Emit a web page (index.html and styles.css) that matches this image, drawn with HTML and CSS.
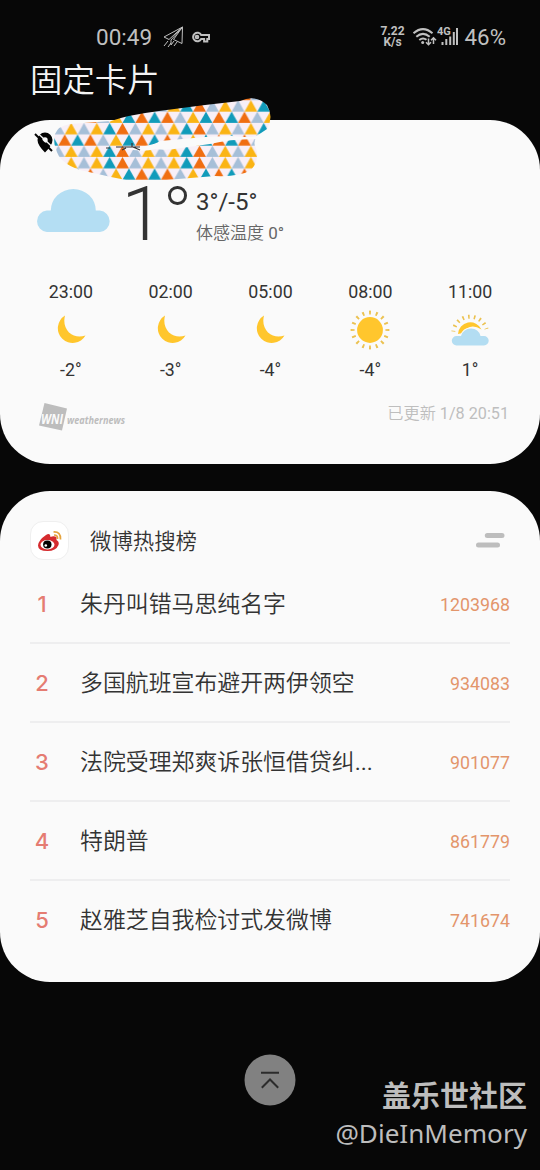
FILE: index.html
```html
<!DOCTYPE html>
<html lang="zh-CN">
<head>
<meta charset="utf-8">
<title>固定卡片</title>
<link rel="stylesheet" href="styles.css">
</head>
<body>
<div class="screen">
  <header class="status">
    <span class="clock">00:49</span>
    <svg class="plane" width="22" height="22" viewBox="0 0 22 22"><path d="M20.5 1 2 11l5 2.500L20.500 1 20 17.500 11.500 13.500 20.500 1 9 14v5l3-4M6 15l-4 5M9 17l-3 4M15 16l-3 4" /></svg>
    <svg class="key" width="18" height="12" viewBox="0 0 18 12"><path d="M9.200 4h7.800v4h-1.700v2.500h-3.200V8H9.200A4.300 4.300 0 1 1 9.200 4Z"/><circle cx="5" cy="6" r="1.300"/></svg>
    <span class="speed"><span>7.22</span><span>K/s</span></span>
    <svg class="wifi" width="25" height="22" viewBox="0 0 25 22"><path d="M1.500 7.300Q11 -1 20.500 7.300M4.300 10.800Q11 5 17.700 10.800M7.300 14Q11 11 14.500 13.800"/><circle cx="10.700" cy="16.500" r="1.500"/><path class="thin" d="M16.500 12.500v6M14 16.300l2.500 2.500 2.500-2.500M21.500 18v-6M19 14.200l2.500-2.500 2.500 2.500"/></svg>
    <svg class="signal" width="22" height="22" viewBox="0 0 22 22"><text x="0" y="9">4G</text><path d="M5.500 19v-3M9.300 19v-6M13.200 19V10.500M16.800 19V6M20 19V2"/></svg>
    <span class="battery">46%</span>
  </header>
  <h1 class="title">固定卡片</h1>

  <section class="card weather">
    <div class="place">
      <svg width="20" height="21" viewBox="0 0 20 21"><path fill-rule="evenodd" d="M11 .5a7.500 7.500 0 0 1 7.500 7.500Q18.500 13 11 20.500 3.500 13 3.500 8A7.500 7.500 0 0 1 11 .5ZM11 5.300a2.700 2.700 0 1 0 0 5.400 2.700 2.700 0 0 0 0-5.400Z"/><path class="slit" d="M3 .5 20 16.500"/><path class="slash" d="m1 2 17 17"/></svg>
    </div>
    <svg class="cover" width="220" height="88" viewBox="53 95 220 88">
      <defs>
        <path id="tri" d="M-6.420 0 0-11.350 6.420 0Z"/>
        <g id="even"><use href="#tri" x="6.420" class="mist"/><use href="#tri" x="19.260" class="gold"/><use href="#tri" x="32.100" class="mist"/><use href="#tri" x="44.940" class="gold"/><use href="#tri" x="57.780" class="teal"/><use href="#tri" x="70.620" class="flame"/></g>
        <g id="odd"><use href="#tri" x="0" class="teal"/><use href="#tri" x="12.840" class="flame"/><use href="#tri" x="25.680" class="teal"/><use href="#tri" x="38.520" class="flame"/><use href="#tri" x="51.360" class="mist"/><use href="#tri" x="64.200" class="gold"/><use href="#tri" x="77.040" class="teal"/></g>
        <pattern id="bunting" patternUnits="userSpaceOnUse" x="51.900" y="88.900" width="77.040" height="91">
          <rect width="78" height="91" class="blush"/>
          <use href="#odd" y="11.350"/><use href="#even" y="22.700"/><use href="#odd" y="34.050"/><use href="#even" y="45.400"/><use href="#odd" y="56.750"/><use href="#even" y="68.100"/><use href="#even" y="79.450"/><use href="#odd" y="90.800"/>
        </pattern>
      </defs>
      <path fill="url(#bunting)" d="M55 134Q58 126 70 124L111 121Q128 115 159 111L205 105 240 101Q256 94 267 105 274 117 267 129L258 135Q252 142 256 148 260 160 251 170 240 177 215 176L166 180 126 180 111 177 80 170Q59 163 56 149 53 143 55 134Z"/>
      <path class="gap" d="M125 148Q151 147 160 141L205 137Q222 136 232 136 252 138 256 136L263 134 259 139Q230 139 210 144L181 148Q167 151 155 149 142 153 125 148Z"/>
      <path class="remnant" d="M106 148h4m6-1h24m-18 3 4-2m7-1 7 3m-8-7v4"/>
    </svg>
    <div class="now">
      <svg class="cloud" width="76" height="43" viewBox="0 0 76 43"><path d="M10.800 43A10.800 10.800 0 0 1 10.800 21.500h4a22.500 21.500 0 0 1 45 0h4A10.800 10.800 0 0 1 64 43Z"/></svg>
      <span class="temp">1</span>
      <span class="deg"></span>
      <div class="range"><span class="hilo">3°/-5°</span><span class="feels">体感温度 <em>0°</em></span></div>
    </div>
    <div class="hours">
      <div class="hour"><span>23:00</span><svg width="40" height="40" viewBox="0 0 40 40"><path class="sunny" d="M14 5.500A14.800 14.800 0 1 0 34.500 25.500Q25 28.500 18 22.500 11.500 15.500 14 5.500Z"/></svg><span>-2°</span></div>
      <div class="hour"><span>02:00</span><svg width="40" height="40" viewBox="0 0 40 40"><path class="sunny" d="M14 5.500A14.800 14.800 0 1 0 34.500 25.500Q25 28.500 18 22.500 11.500 15.500 14 5.500Z"/></svg><span>-3°</span></div>
      <div class="hour"><span>05:00</span><svg width="40" height="40" viewBox="0 0 40 40"><path class="sunny" d="M14 5.500A14.800 14.800 0 1 0 34.500 25.500Q25 28.500 18 22.500 11.500 15.500 14 5.500Z"/></svg><span>-4°</span></div>
      <div class="hour"><span>08:00</span><svg width="40" height="40" viewBox="0 0 40 40"><circle class="sunny" cx="20" cy="20" r="12.900"/><circle class="rays" cx="20" cy="20" r="17.400" pathLength="160"/></svg><span>-4°</span></div>
      <div class="hour"><span>11:00</span><svg width="40" height="40" viewBox="0 0 40 40"><path class="sunny" d="M8 24a12.300 12.300 0 0 1 23.500-4.500Q20 12 12.500 23Z"/><path class="halfrays" pathLength="80" d="M3.300 21.500A17 17 0 0 1 36.500 19"/><path class="cool" d="M6.500 35.500a4.700 4.700 0 0 1 0-9.400h4.500q2.500-7.500 10-7.500t9.500 7.500h3.500a4.700 4.700 0 0 1 0 9.400Z"/></svg><span>1°</span></div>
    </div>
    <footer class="source">
      <svg width="90" height="30" viewBox="0 0 90 30"><path d="M5.500 0 28 5.500 23 27.500 0 22.500Z"/><text class="wn" x="2" y="21" textLength="22" lengthAdjust="spacingAndGlyphs">WNI</text><text class="wnews" x="28" y="20.500" textLength="58" lengthAdjust="spacingAndGlyphs">weathernews</text></svg>
      <span class="updated">已更新 <em>1/8 20:51</em></span>
    </footer>
  </section>

  <section class="card trends">
    <header class="head">
      <span class="logo"><svg width="26" height="24" viewBox="0 0 26 24"><path class="red" d="M9 6q3-2 4 0l.5 2q3-1.500 6 0v3q3 1.500 2 5-2.500 6-11 6Q1 22 1 16.500 1.500 11 9 6Z"/><ellipse class="eye" cx="10.500" cy="15.800" rx="7" ry="4.700"/><ellipse cx="10.300" cy="15.500" rx="4.200" ry="3.900"/><circle class="eye" cx="8.800" cy="16.500" r="1.300"/><path class="wave" d="M16.500 3q7.500-.5 7 7.500M17 6q4 0 3.500 4"/></svg></span>
      <h2>微博热搜榜</h2>
      <svg class="more" width="30" height="18" viewBox="0 0 30 18"><path d="M11.300 4.500h14.700M2.500 14h19"/></svg>
    </header>
    <ol class="list">
      <li><b>1</b><span>朱丹叫错马思纯名字</span><i>1203968</i></li>
      <li><b>2</b><span>多国航班宣布避开两伊领空</span><i>934083</i></li>
      <li><b>3</b><span>法院受理郑爽诉张恒借贷纠<em>...</em></span><i>901077</i></li>
      <li><b>4</b><span>特朗普</span><i>861779</i></li>
      <li><b>5</b><span>赵雅芝自我检讨式发微博</span><i>741674</i></li>
    </ol>
  </section>

  <footer class="bottom">
    <svg class="top" width="52" height="52" viewBox="0 0 52 52"><circle cx="26" cy="26" r="25.500"/><path d="M17 18.800h18M17.800 33.700l8.200-8.200 8.200 8.200"/></svg>
    <div class="credit"><strong>盖乐世社区</strong><span>@DieInMemory</span></div>
  </footer>
</div>
</body>
</html>
```

FILE: styles.css
```css
* { box-sizing: border-box; }
body { margin: 0; background: #070707; font-family: Roboto, "Noto Sans CJK SC", sans-serif; color: #333; }
em { font-style: normal; font-weight: 400; }
.screen { width: 540px; height: 1170px; display: flex; flex-direction: column; overflow: hidden; }

.status { height: 58px; padding: 16px 34px 0 96px; display: flex; align-items: center; color: #c0c0c0; }
.status svg { fill: none; stroke: #c0c0c0; flex: none; }
.clock { font-size: 22.5px; width: 66px; }
.plane { stroke-width: 1; }
.key { margin-left: 8px; stroke-width: 2; }
.speed { margin-left: auto; display: flex; flex-direction: column; align-items: center; font-size: 12px; line-height: 11.500px; font-weight: 700; }
.wifi { margin-left: 7px; stroke-width: 2; }
.wifi circle { fill: #c0c0c0; stroke: none; }
.wifi .thin { stroke-width: 1.5; }
.signal { stroke-width: 2; }
.signal text { fill: #c0c0c0; stroke: none; font-size: 11px; font-weight: 700; }
.battery { margin-left: 6px; font-size: 22.3px; }

.title { margin: 0; height: 62px; padding: 2px 0 0 30px; color: #f4f4f4; font-size: 32.4px; line-height: 43px; font-weight: 350; }

.card { background: #fafafa; border-radius: 50px; }
.weather { position: relative; height: 344px; }
.place { height: 67px; padding: 12px 0 0 34px; }
.place svg { display: block; fill: #050505; }
.place .slit { stroke: #fafafa; stroke-width: 1.3; }
.place .slash { stroke: #050505; stroke-width: 2; }
.cover { position: absolute; left: 53px; top: -25px; }
.mist { fill: #a6bfd8; }
.gold { fill: #fab414; }
.teal { fill: #119bba; }
.flame { fill: #f06e11; }
.blush { fill: #f8eff7; }
.gap { fill: #fafafa; }
.remnant { fill: none; stroke: #333; stroke-width: 1.2; }

.now { height: 89px; padding-left: 35.5px; display: flex; align-items: flex-start; }
.cloud { margin-top: 2px; fill: #b4def3; }
.temp { width: 56.5px; padding-left: 10px; font-size: 76px; line-height: 54px; font-weight: 300; }
.deg { width: 18.5px; height: 18.5px; margin-top: -1px; border: 3.500px solid #333; border-radius: 50%; }
.range { margin-left: 9.5px; display: flex; flex-direction: column; }
.hilo { font-size: 24px; line-height: 31px; }
.feels { font-size: 17px; line-height: 30px; color: #666; font-weight: 350; }

.hours { height: 120px; padding: 5px 20px 0 21px; display: grid; grid-template-columns: repeat(5, 99.8px); }
.hour { display: flex; flex-direction: column; align-items: center; font-size: 17.8px; line-height: 22px; }
.hour svg { margin: 7px 0 9px; }
.sunny { fill: #ffc62d; }
.rays, .halfrays { fill: none; stroke: #ebc14f; stroke-width: 4; stroke-dasharray: 2.800 7.200; stroke-dashoffset: 1.400; }
.cool { fill: #b3ddf2; stroke: #fafafa; stroke-width: 2; paint-order: stroke; }

.source { height: 42px; padding: 7px 31px 0 39px; display: flex; justify-content: space-between; color: #bebebe; }
.source svg { fill: #bdbdbd; }
.source text { font-family: "Open Sans", sans-serif; font-weight: 700; font-style: italic; }
.wn { fill: #fafafa; font-size: 15px; }
.wnews { font-size: 10px; }
.updated { font-size: 16.2px; line-height: 21px; font-weight: 350; }

.trends { margin-top: 27px; height: 491px; padding: 0 30px; }
.head { height: 74px; padding-top: 27px; display: flex; align-items: flex-start; }
.logo { width: 39px; height: 39px; margin-top: 3px; display: grid; place-items: center; background: #fff; border: 1px solid #efefef; border-radius: 13px; }
.red { fill: #d52b2e; }
.eye { fill: #fff; }
.wave { fill: none; stroke: #e5a33e; stroke-width: 1.7; }
.head h2 { margin: 9px 0 0 21px; font-size: 21.4px; line-height: 30px; font-weight: 350; }
.more { margin: 13px 4px 0 auto; fill: none; stroke: #bdbdbd; stroke-width: 5; stroke-linecap: round; }

.list { list-style: none; margin: 0; padding: 0; }
.list li { height: 79px; padding-top: 1px; display: flex; align-items: center; border-bottom: 2px solid #eeeeef; }
.list li:last-child { border-bottom-color: transparent; }
.list b { width: 24px; text-align: center; margin-right: 26px; font: 500 22px Inter, sans-serif; color: #e57c72; }
.list span { padding-top: 2px; font-size: 22.9px; line-height: 34px; font-weight: 350; }
.list i { margin-left: auto; font-style: normal; font-size: 17.8px; color: #e3956b; }

.bottom { position: relative; flex: 1; display: flex; justify-content: flex-end; padding: 92px 13px 0 0; }
.top { position: absolute; left: 244px; top: 72px; }
.top circle { fill: #818181; }
.top path { fill: none; stroke: #2c2c2c; stroke-width: 2; }
.credit { display: flex; flex-direction: column; align-items: flex-end; color: #bdbdbd; }
.credit strong { font: 700 29px/40px "Noto Sans CJK SC", sans-serif; }
.credit span { font: 26.1px/38px "Noto Sans", sans-serif; }
```
